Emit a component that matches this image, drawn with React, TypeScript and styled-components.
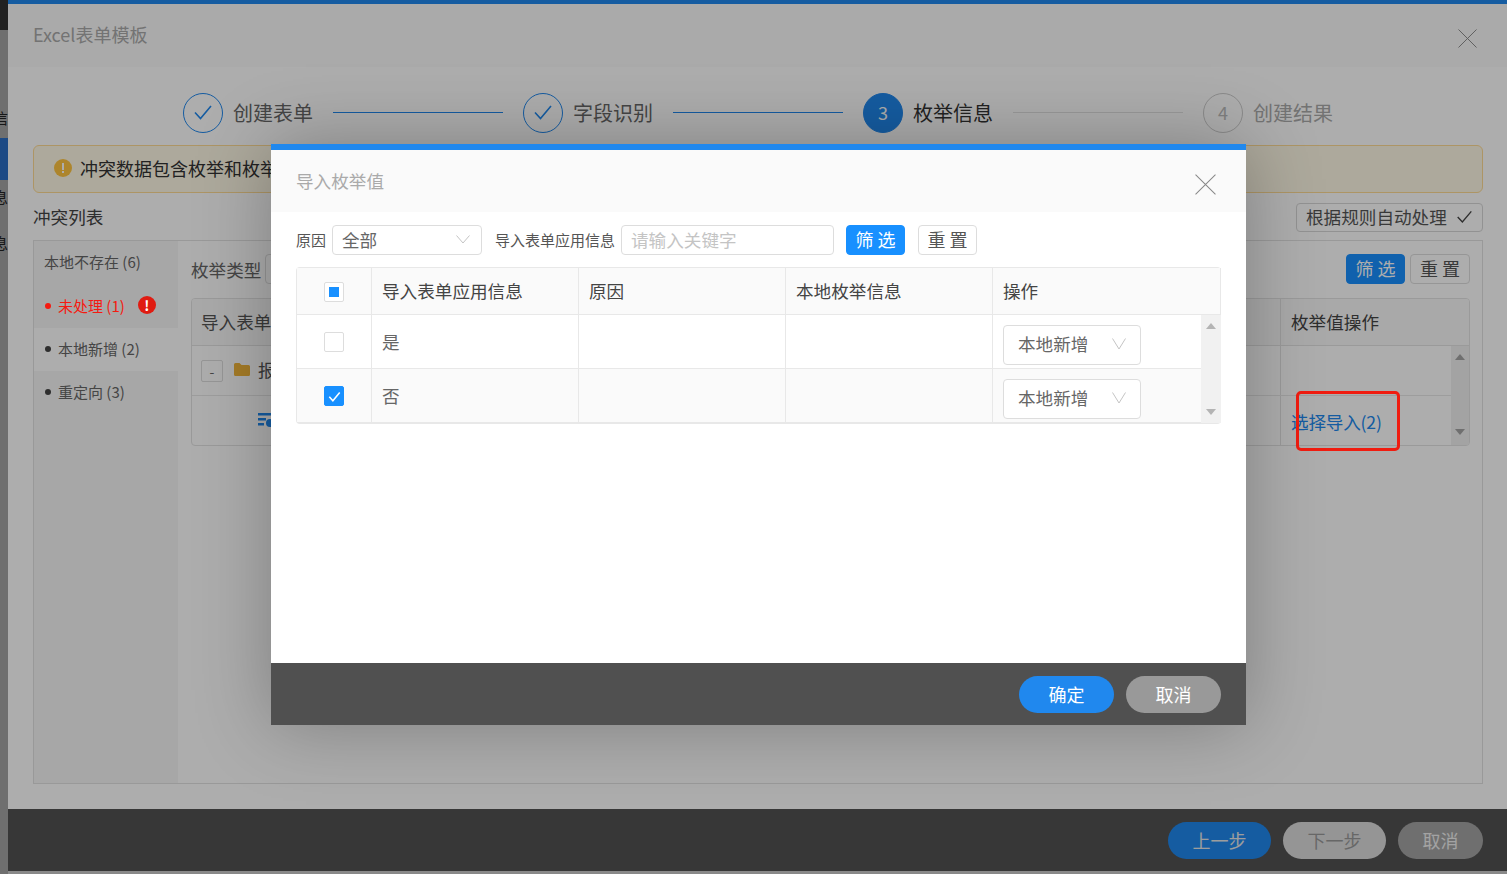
import React from "react";
import styled, { createGlobalStyle } from "styled-components";

const Global = createGlobalStyle`
  html, body { margin: 0; padding: 0; height: 100%; overflow: hidden; }
  body { font-family: "Noto Sans CJK SC", "Noto Sans", "Liberation Sans", sans-serif; color: #333; }
  * { box-sizing: border-box; }
`;

const Root = styled.div`
  position: relative; width: 1507px; height: 874px; display: flex; overflow: hidden; background: #cbcbcb;
`;
const Strip = styled.div`
  width: 8px; height: 874px; display: flex; flex-direction: column; background: #a4a4a4; flex: none; overflow: hidden;
`;
const StripPart = styled.div<{ $h: number; $bg?: string }>`
  height: ${(p) => p.$h}px; flex: none; background: ${(p) => p.$bg || "transparent"};
  display: flex; align-items: center; justify-content: flex-end; overflow: hidden;
  font-size: 15px; white-space: nowrap; color: #222;
`;
const Main = styled.div`
  width: 1499px; height: 871px; display: flex; flex-direction: column; background: #fff; border-top: 4px solid #2088ee; flex: none;
`;
const Head = styled.div`
  height: 63px; flex: none; background: #fbfbfb; display: flex; align-items: center; justify-content: space-between; padding: 0 30px 0 25px;
`;
const HeadTitle = styled.div`
  font-size: 18px; color: #aaa; padding-bottom: 4px;
`;
const CloseSlot = styled.div`
  display: flex; padding-top: 6px;
`;
const Body = styled.div`
  flex: 1; display: flex; flex-direction: column; padding: 26px 24px 25px 25px; min-height: 0;
`;
const Steps = styled.div`
  display: flex; align-items: center; height: 40px; padding-left: 150px; flex: none;
`;
const Circle = styled.div<{ $state: "done" | "active" | "todo" }>`
  width: 40px; height: 40px; border-radius: 50%; flex: none; display: flex; align-items: center; justify-content: center;
  font-size: 18px; padding-bottom: 2px;
  color: ${(p) => (p.$state === "active" ? "#fff" : p.$state === "done" ? "#2088ee" : "#bbb")};
  background: ${(p) => (p.$state === "active" ? "#2088ee" : "transparent")};
  border: 1px solid ${(p) => (p.$state === "todo" ? "#ccc" : "#2088ee")};
`;
const StepLabel = styled.div<{ $state: "done" | "active" | "todo" }>`
  width: 80px; margin-left: 10px; font-size: 20px; flex: none; white-space: nowrap; line-height: 40px; height: 40px;
  color: ${(p) => (p.$state === "active" ? "#333" : p.$state === "done" ? "#666" : "#aaa")};
`;
const StepLine = styled.div<{ $on: boolean }>`
  width: 170px; height: 1px; margin: 0 20px 1px; flex: none; background: ${(p) => (p.$on ? "#2088ee" : "#e2e2e2")};
`;
const Alert = styled.div`
  flex: none; height: 48px; margin-top: 12px; border: 1px solid #ffdc95; border-radius: 6px; background: #fff9e6;
  display: flex; align-items: center; gap: 8px; padding: 0 0 2px 20px; font-size: 18px;
`;
const ToolRow = styled.div`
  flex: none; height: 29px; margin: 10px 0 8px; display: flex; align-items: center; justify-content: space-between;
  font-size: 17.6px; color: #444;
`;
const ToolTitle = styled.span`
  padding-bottom: 3px;
`;
const OutlineBtn = styled.div`
  height: 29px; width: 187px; border: 1px solid #d8d8d8; border-radius: 4px; display: flex; align-items: center; gap: 9px;
  padding: 0 0 2px 9px; font-size: 17.6px; color: #555; white-space: nowrap;
`;
const Panel = styled.div`
  flex: 1; display: flex; border: 1px solid #e2e2e2; min-height: 0;
`;
const Side = styled.div`
  width: 144px; flex: none; background: #f6f6f6; display: flex; flex-direction: column;
`;
const SideItem = styled.div<{ $active?: boolean; $h?: number }>`
  height: ${(p) => p.$h || 43}px; display: flex; align-items: center; padding: 0 0 3px 10px; font-size: 15px; color: #666;
  white-space: nowrap; background: ${(p) => (p.$active ? "#fff" : "transparent")};
`;
const Dot = styled.span<{ $red?: boolean }>`
  width: 6px; height: 6px; border-radius: 50%; flex: none; margin: 2px 7px 0 1px; background: #444;
  ${(p) => p.$red && "background: #f51a10; position: relative; z-index: 2;"}
`;
const RedLabel = styled.span`
  color: #f51a10; position: relative; z-index: 2;
`;
const RedBadge = styled.span`
  width: 18px; height: 18px; border-radius: 50%; background: #e01c12; color: #fff; margin-left: 13px; position: relative; z-index: 2;
  display: flex; align-items: center; justify-content: center; font-size: 14px; font-weight: 700; line-height: 1;
`;
const Content = styled.div`
  flex: 1; display: flex; flex-direction: column; padding: 13px 12px 0 13px; min-width: 0;
`;
const QueryRow = styled.div`
  height: 30px; flex: none; margin-bottom: 14px; display: flex; align-items: center; font-size: 17.6px; color: #666;
`;
const TypeSelect = styled.div`
  width: 200px; height: 30px; margin-left: 4px; border: 1px solid #ddd; border-radius: 4px; flex: none;
`;
const Spacer = styled.div`
  flex: 1;
`;
const Btn = styled.div<{ $primary?: boolean; $w?: number }>`
  width: ${(p) => p.$w || 59}px; height: 30px; border-radius: 4px; display: flex; align-items: center; justify-content: center; flex: none;
  font-size: 18px; white-space: pre; padding-bottom: 2px;
  background: ${(p) => (p.$primary ? "#1890ff" : "#fff")};
  color: ${(p) => (p.$primary ? "#fff" : "#555")};
  border: 1px solid ${(p) => (p.$primary ? "#1890ff" : "#ddd")};
`;
const BackTable = styled.div`
  flex: none; border: 1px solid #e4e4e4; border-radius: 4px; height: 148px; display: flex; flex-direction: column; overflow: hidden;
`;
const BackHeader = styled.div`
  height: 47px; flex: none; display: flex; background: #fafafa; border-bottom: 1px solid #e4e4e4; font-size: 17.6px; color: #444;
`;
const BackBody = styled.div`
  flex: 1; display: flex; min-height: 0;
`;
const BackRows = styled.div`
  flex: 1; display: flex; flex-direction: column; min-width: 0;
`;
const BackRow = styled.div<{ $last?: boolean }>`
  flex: 1; display: flex; ${(p) => !p.$last && "border-bottom: 1px solid #e8e8e8;"}
`;
const BackMain = styled.div<{ $indent?: number }>`
  flex: 1; display: flex; align-items: center; gap: 11px; padding: 0 0 2px ${(p) => p.$indent ?? 9}px; font-size: 17.6px; color: #555; white-space: nowrap;
`;
const BackOp = styled.div`
  width: 171px; flex: none; border-left: 1px solid #e4e4e4; display: flex; align-items: center; padding: 0 0 2px 10px; font-size: 17.6px; white-space: nowrap;
`;
const BackHeadOp = styled(BackOp)`
  width: 189px; color: #444;
`;
const LinkText = styled.span`
  color: #2088ee; letter-spacing: -0.2px; padding-top: 4px;
`;
const Toggle = styled.div`
  width: 22px; height: 22px; border: 1px solid #ddd; border-radius: 2px; display: flex; align-items: center; justify-content: center; font-size: 14px; color: #666;
  margin-top: 2px;
`;
const FolderName = styled.span`
  margin-left: -3px;
`;
const Bar = styled.div<{ $bg: string }>`
  width: 18px; flex: none; background: ${(p) => p.$bg}; display: flex; flex-direction: column; justify-content: space-between; align-items: center; padding: 8px 0 10px;
`;
const ArrowUp = styled.div`
  width: 0; height: 0; border-left: 5px solid transparent; border-right: 5px solid transparent; border-bottom: 6px solid #a4a4a4;
`;
const ArrowDown = styled.div`
  width: 0; height: 0; border-left: 5px solid transparent; border-right: 5px solid transparent; border-top: 6px solid #a4a4a4;
`;
const Foot = styled.div`
  height: 62px; flex: none; background: #525252; display: flex; align-items: center; justify-content: flex-end; padding-right: 24px; gap: 12px;
`;
const Pill = styled.div<{ $w: number; $bg: string; $fg?: string }>`
  width: ${(p) => p.$w}px; height: 37px; border-radius: 19px; background: ${(p) => p.$bg}; color: ${(p) => p.$fg || "#fff"};
  display: flex; align-items: center; justify-content: center; font-size: 18px; flex: none; padding-bottom: 1px;
`;
const Overlay = styled.div`
  position: absolute; inset: 0; background: rgba(0, 0, 0, 0.32); z-index: 1;
`;
const Modal = styled.div`
  position: absolute; left: 271px; top: 144px; width: 975px; height: 581px; z-index: 3; background: #fff; display: flex; flex-direction: column;
  border-top: 6px solid #2088ee; box-shadow: 0 0 70px rgba(0, 0, 0, 0.28);
`;
const MHead = styled.div`
  height: 62px; flex: none; background: #fafafa; display: flex; align-items: center; justify-content: space-between; padding: 0 30px 0 25px;
`;
const MTitle = styled.div`
  font-size: 17.6px; color: #aaa; padding-bottom: 2px;
`;
const MBody = styled.div`
  flex: 1; padding: 13px 25px 0; min-height: 0; display: flex; flex-direction: column;
`;
const Filter = styled.div`
  height: 30px; flex: none; margin-bottom: 12px; display: flex; align-items: center;
`;
const FLabel = styled.div<{ $w: number; $ml?: number }>`
  width: ${(p) => p.$w}px; margin-left: ${(p) => p.$ml || 0}px; margin-right: 6px; flex: none; font-size: 15px; color: #555; white-space: nowrap; padding-bottom: 2px;
`;
const SelectBox = styled.div<{ $w: number; $h: number; $color?: string; $pad: number; $chev: number; $mt?: number }>`
  width: ${(p) => p.$w}px; height: ${(p) => p.$h}px; flex: none; border: 1px solid #ddd; border-radius: 4px; background: #fff;
  display: flex; align-items: center; justify-content: space-between; padding: 0 ${(p) => p.$chev}px 2px ${(p) => p.$pad}px;
  margin-top: ${(p) => p.$mt || 0}px;
  font-size: 17.6px; color: ${(p) => p.$color || "#666"}; white-space: nowrap;
`;
const InputBox = styled.div`
  width: 213px; height: 30px; flex: none; border: 1px solid #ddd; border-radius: 4px; padding: 0 0 2px 9px; display: flex; align-items: center;
  font-size: 17.6px; color: #c4c4c4; white-space: nowrap;
`;
const FilterBtn = styled(Btn)<{ $ml: number }>`
  margin-left: ${(p) => p.$ml}px;
`;
const MTable = styled.div`
  flex: none; width: 925px; height: 157px; border: 1px solid #e8e8e8; border-radius: 4px; display: flex; flex-direction: column; border-right: 0;
`;
const MHeader = styled.div`
  display: grid; grid-template-columns: 74px 207px 207px 207px 1fr; height: 47px; flex: none; background: #fafafa; border-bottom: 1px solid #e8e8e8; border-right: 1px solid #e8e8e8;
`;
const MRows = styled.div`
  flex: 1; display: flex; min-height: 0;
`;
const MRowList = styled.div`
  flex: 1; display: flex; flex-direction: column; min-width: 0;
`;
const MRow = styled.div<{ $alt?: boolean; $h: number }>`
  display: grid; grid-template-columns: 74px 207px 207px 207px 1fr; height: ${(p) => p.$h}px; flex: none; background: ${(p) => (p.$alt ? "#fafafa" : "#fff")};
  border-bottom: 1px solid #e8e8e8;
`;
const Cell = styled.div<{ $center?: boolean; $head?: boolean }>`
  display: flex; align-items: center; justify-content: ${(p) => (p.$center ? "center" : "flex-start")};
  padding: ${(p) => (p.$center ? "1px 0 0 0" : p.$head ? "0 0 2px 10px" : "0 0 0 10px")};
  font-size: 17.6px; color: ${(p) => (p.$head ? "#444" : "#666")};
  border-left: 1px solid #e8e8e8; white-space: nowrap;
  &:first-child { border-left: 0; }
`;
const Checkbox = styled.div<{ $state: "none" | "partial" | "checked" }>`
  width: 20px; height: 20px; border-radius: 2px; display: flex; align-items: center; justify-content: center;
  border: 1px solid ${(p) => (p.$state === "checked" ? "#1890ff" : "#ddd")};
  background: ${(p) => (p.$state === "checked" ? "#1890ff" : "#fff")};
`;
const CheckFill = styled.div`
  width: 10px; height: 10px; background: #1890ff;
`;
const MBar = styled(Bar)`
  width: 20px; padding: 8px 0;
`;
const MArrowUp = styled(ArrowUp)`
  border-bottom-color: #b4b4b4;
`;
const MArrowDown = styled(ArrowDown)`
  border-top-color: #b4b4b4;
`;
const MFoot = styled.div`
  height: 62px; flex: none; background: #505050; display: flex; align-items: center; justify-content: flex-end; padding-right: 25px; gap: 12px;
`;
const RedBox = styled.div`
  position: absolute; left: 1296px; top: 391px; width: 104px; height: 60px; border: 3px solid #f01c10; border-radius: 5px; z-index: 2;
`;

const Close = ({ size, color }: { size: number; color: string }) => (
  <svg width={size} height={size} viewBox="0 0 20 20" fill="none" stroke={color} strokeWidth="1">
    <path d="M.5.5l19 19M19.5.5l-19 19" />
  </svg>
);
const Chevron = ({ h = 9, color = "#c4c4c4" }: { h?: number; color?: string }) => (
  <svg width="14" height={h} viewBox={`0 0 14 ${h}`} fill="none" stroke={color} strokeWidth="1">
    <path d={`M.5.5L7 ${h - 1}l6.5-${h - 1.5}`} />
  </svg>
);
const CheckMark = ({ size, color, width = 1.6 }: { size: number; color: string; width?: number }) => (
  <svg width={size} height={size} viewBox="0 0 20 20" fill="none" stroke={color} strokeWidth={width}>
    <path d="M2 10.5l5.5 6L18 4" />
  </svg>
);
const AlertIcon = () => (
  <svg width="18" height="18" viewBox="0 0 18 18" style={{ flex: "none" }}>
    <circle cx="9" cy="9" r="9" fill="#ffc541" />
    <rect x="8" y="4" width="2" height="7" fill="#fff" />
    <rect x="8" y="12" width="2" height="2" fill="#fff" />
  </svg>
);
const Folder = () => (
  <svg width="16" height="13" viewBox="0 0 16 13" style={{ flex: "none" }}>
    <path d="M0 1.5A1.5 1.5 0 0 1 1.500 0h4l2 2h7A1.500 1.500 0 0 1 16 3.500v8A1.500 1.500 0 0 1 14.500 13h-13A1.500 1.500 0 0 1 0 11.500z" fill="#f2b53a" />
  </svg>
);
const TreeIcon = () => (
  <svg width="14" height="16" viewBox="0 0 14 16" style={{ flex: "none" }} fill="#2088ee">
    <rect x="0" y="1" width="14" height="2.500" />
    <rect x="0" y="6" width="8" height="2.500" />
    <rect x="0" y="11" width="6" height="2.500" />
    <circle cx="12" cy="11" r="4" />
  </svg>
);

const steps: { n: string; label: string; state: "done" | "active" | "todo" }[] = [
  { n: "", label: "创建表单", state: "done" },
  { n: "", label: "字段识别", state: "done" },
  { n: "3", label: "枚举信息", state: "active" },
  { n: "4", label: "创建结果", state: "todo" },
];

const modalRows = [
  { label: "是", check: "none" as const, alt: false, h: 54 },
  { label: "否", check: "checked" as const, alt: true, h: 54 },
];

export default function App() {
  return (
    <Root>
      <Global />
      <Strip>
        <StripPart $h={30} $bg="#323232" />
        <StripPart $h={67} />
        <StripPart $h={41}>码信</StripPart>
        <StripPart $h={42} $bg="#2b6dc4" />
        <StripPart $h={32}>信息</StripPart>
        <StripPart $h={60}>信息</StripPart>
      </Strip>
      <Main>
        <Head>
          <HeadTitle>Excel表单模板</HeadTitle>
          <CloseSlot>
            <Close size={19} color="#888" />
          </CloseSlot>
        </Head>
        <Body>
          <Steps>
            {steps.map((s, i) => (
              <React.Fragment key={s.label}>
                <Circle $state={s.state}>
                  {s.n || <CheckMark size={20} color="#2088ee" />}
                </Circle>
                <StepLabel $state={s.state}>{s.label}</StepLabel>
                {i < 3 && <StepLine $on={s.state === "done"} />}
              </React.Fragment>
            ))}
          </Steps>
          <Alert>
            <AlertIcon />
            冲突数据包含枚举和枚举值
          </Alert>
          <ToolRow>
            <ToolTitle>冲突列表</ToolTitle>
            <OutlineBtn>
              根据规则自动处理
              <CheckMark size={17} color="#444" width={1.6} />
            </OutlineBtn>
          </ToolRow>
          <Panel>
            <Side>
              <SideItem $h={44}>本地不存在 (6)</SideItem>
              <SideItem>
                <Dot $red />
                <RedLabel>未处理 (1)</RedLabel>
                <RedBadge>!</RedBadge>
              </SideItem>
              <SideItem $active>
                <Dot />
                本地新增 (2)
              </SideItem>
              <SideItem>
                <Dot />
                重定向 (3)
              </SideItem>
            </Side>
            <Content>
              <QueryRow>
                枚举类型
                <TypeSelect />
                <Spacer />
                <Btn $primary>筛 选</Btn>
                <FilterBtn $ml={5} $w={60}>重 置</FilterBtn>
              </QueryRow>
              <BackTable>
                <BackHeader>
                  <BackMain>导入表单应用信息</BackMain>
                  <BackHeadOp>枚举值操作</BackHeadOp>
                </BackHeader>
                <BackBody>
                  <BackRows>
                    <BackRow>
                      <BackMain>
                        <Toggle>-</Toggle>
                        <Folder />
                        <FolderName>报表</FolderName>
                      </BackMain>
                      <BackOp />
                    </BackRow>
                    <BackRow $last>
                      <BackMain $indent={66}>
                        <TreeIcon />
                      </BackMain>
                      <BackOp>
                        <LinkText>选择导入(2)</LinkText>
                      </BackOp>
                    </BackRow>
                  </BackRows>
                  <Bar $bg="#f0f0f0">
                    <ArrowUp />
                    <ArrowDown />
                  </Bar>
                </BackBody>
              </BackTable>
            </Content>
          </Panel>
        </Body>
        <Foot>
          <Pill $w={103} $bg="#2088ee" $fg="#e8e8e8">上一步</Pill>
          <Pill $w={103} $bg="#dcdcdc" $fg="#999">下一步</Pill>
          <Pill $w={85} $bg="#a4a4a4" $fg="#f0f0f0">取消</Pill>
        </Foot>
      </Main>
      <Overlay />
      <RedBox />
      <Modal>
        <MHead>
          <MTitle>导入枚举值</MTitle>
          <CloseSlot>
            <Close size={21} color="#888" />
          </CloseSlot>
        </MHead>
        <MBody>
          <Filter>
            <FLabel $w={30}>原因</FLabel>
            <SelectBox $w={150} $h={30} $pad={9} $chev={11}>
              全部
              <Chevron />
            </SelectBox>
            <FLabel $w={120} $ml={13}>导入表单应用信息</FLabel>
            <InputBox>请输入关键字</InputBox>
            <FilterBtn $primary $ml={12}>筛 选</FilterBtn>
            <FilterBtn $ml={13}>重 置</FilterBtn>
          </Filter>
          <MTable>
            <MHeader>
              <Cell $center>
                <Checkbox $state="partial">
                  <CheckFill />
                </Checkbox>
              </Cell>
              <Cell $head>导入表单应用信息</Cell>
              <Cell $head>原因</Cell>
              <Cell $head>本地枚举信息</Cell>
              <Cell $head>操作</Cell>
            </MHeader>
            <MRows>
              <MRowList>
                {modalRows.map((r) => (
                  <MRow key={r.label} $alt={r.alt} $h={r.h}>
                    <Cell $center>
                      <Checkbox $state={r.check}>
                        {r.check === "checked" && <CheckMark size={13} color="#fff" width={2.4} />}
                      </Checkbox>
                    </Cell>
                    <Cell>{r.label}</Cell>
                    <Cell />
                    <Cell />
                    <Cell>
                      <SelectBox $w={138} $h={40} $pad={14} $chev={14} $mt={6}>
                        本地新增
                        <Chevron h={12} />
                      </SelectBox>
                    </Cell>
                  </MRow>
                ))}
              </MRowList>
              <MBar $bg="#f1f1f1">
                <MArrowUp />
                <MArrowDown />
              </MBar>
            </MRows>
          </MTable>
        </MBody>
        <MFoot>
          <Pill $w={95} $bg="#2088ee">确定</Pill>
          <Pill $w={95} $bg="#999">取消</Pill>
        </MFoot>
      </Modal>
    </Root>
  );
}
